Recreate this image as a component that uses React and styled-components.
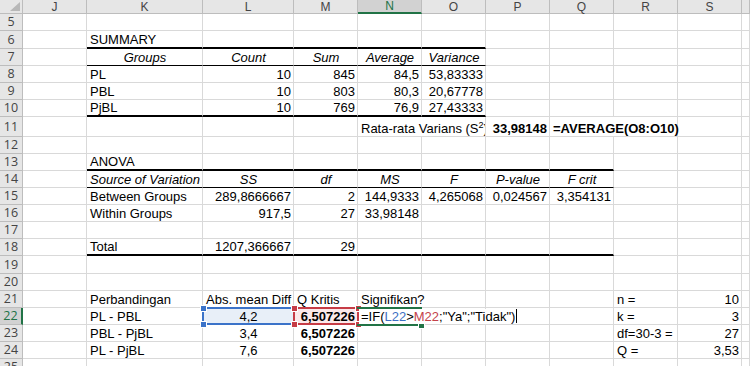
import styled, { createGlobalStyle } from "styled-components";

const GlobalStyle = createGlobalStyle`
  html, body {
    margin: 0;
    padding: 0;
    background: #ffffff;
  }
`;

// column letters after the row header, widths include the 1px grid line
const COLS = ["J", "K", "L", "M", "N", "O", "P", "Q", "R", "S", "T"];
const COL_W = { J: 64, K: 116, L: 91, M: 64, N: 64, O: 64, P: 64, Q: 64, R: 64, S: 64 };
const ROWS = [5, 6, 7, 8, 9, 10, 11, 12, 13, 14, 15, 16, 17, 18, 19, 20, 21, 22, 23, 24, 25];
const ROW_H = { 6: 18, 11: 20, 19: 18 };
const rowH = (r) => ROW_H[r] || 17;

const SUMMARY_COLS = ["K", "L", "M", "N", "O"];
const ANOVA_COLS = ["K", "L", "M", "N", "O", "P", "Q"];

const lineFor = (row, col) => {
  if ((row === 6 || row === 10) && SUMMARY_COLS.includes(col)) return "thick";
  if (row === 7 && SUMMARY_COLS.includes(col)) return "thin";
  if ((row === 13 || row === 18) && ANOVA_COLS.includes(col)) return "thick";
  if (row === 14 && ANOVA_COLS.includes(col)) return "thin";
  return null;
};

const Sup = styled.sup`
  font-size: 9px;
  line-height: 0;
  vertical-align: 5px;
`;

const bold = (t) => ({ t, a: "r", b: true });
const num = (t) => ({ t, a: "r" });
const head = (t, a = "c") => ({ t, a, i: true });

const DATA = {
  6: { K: { t: "SUMMARY" } },
  7: { K: head("Groups"), L: head("Count"), M: head("Sum"), N: head("Average"), O: head("Variance") },
  8: { K: { t: "PL" }, L: num("10"), M: num("845"), N: num("84,5"), O: num("53,83333") },
  9: { K: { t: "PBL" }, L: num("10"), M: num("803"), N: num("80,3"), O: num("20,67778") },
  10: { K: { t: "PjBL" }, L: num("10"), M: num("769"), N: num("76,9"), O: num("27,43333") },
  11: {
    N: {
      t: (
        <span>
          Rata-rata Varians (S<Sup>2</Sup>)
        </span>
      ),
      span: 2,
      clip: true,
    },
    P: bold("33,98148"),
    Q: { t: "=AVERAGE(O8:O10)", b: true, span: 2 },
  },
  13: { K: { t: "ANOVA" } },
  14: {
    K: head("Source of Variation", "l"),
    L: head("SS"),
    M: head("df"),
    N: head("MS"),
    O: head("F"),
    P: head("P-value"),
    Q: head("F crit"),
  },
  15: {
    K: { t: "Between Groups" },
    L: num("289,8666667"),
    M: num("2"),
    N: num("144,9333"),
    O: num("4,265068"),
    P: num("0,024567"),
    Q: num("3,354131"),
  },
  16: { K: { t: "Within Groups" }, L: num("917,5"), M: num("27"), N: num("33,98148") },
  18: { K: { t: "Total" }, L: num("1207,366667"), M: num("29") },
  21: {
    K: { t: "Perbandingan" },
    L: { t: "Abs. mean Diff" },
    M: { t: "Q Kritis" },
    N: { t: "Signifikan?", span: 2 },
    R: { t: "n =" },
    S: num("10"),
  },
  22: {
    K: { t: "PL - PBL" },
    L: { t: "4,2", a: "c", bg: "#e8eff8" },
    M: { ...bold("6,507226"), bg: "#fbe9ea" },
    R: { t: "k =" },
    S: num("3"),
  },
  23: { K: { t: "PBL - PjBL" }, L: { t: "3,4", a: "c" }, M: bold("6,507226"), R: { t: "df=30-3 =" }, S: num("27") },
  24: { K: { t: "PL - PjBL" }, L: { t: "7,6", a: "c" }, M: bold("6,507226"), R: { t: "Q =" }, S: num("3,53") },
};

const ACTIVE_COL = "N";
const ACTIVE_ROW = 22;

const colLeft = (col) => {
  let x = 23;
  for (const c of COLS) {
    if (c === col) return x;
    x += COL_W[c];
  }
  return x;
};
const rowTop = (row) => {
  let y = 14;
  for (const r of ROWS) {
    if (r === row) return y;
    y += rowH(r);
  }
  return y;
};

const Sheet = styled.div`
  position: relative;
  display: grid;
  grid-template-columns: 23px ${COLS.slice(0, -1).map((c) => COL_W[c] + "px").join(" ")} 1fr;
  grid-template-rows: 14px ${ROWS.map((r) => rowH(r) + "px").join(" ")};
  width: 750px;
  height: 366px;
  overflow: hidden;
  background: #ffffff;
  font-family: "Liberation Sans", Arial, sans-serif;
  font-size: 13px;
  color: #000000;
`;

const Corner = styled.div`
  background: #e6e6e6;
  border-right: 1px solid #bdbdbd;
  border-bottom: 1px solid #bdbdbd;
  display: flex;
  align-items: flex-end;
  justify-content: flex-end;
  padding: 0 2px 2px 0;
  box-sizing: border-box;
`;

const ColHead = styled.div`
  background: ${(p) => (p.$active ? "#d2d2d2" : "#e6e6e6")};
  color: ${(p) => (p.$active ? "#217346" : "#444444")};
  border-right: 1px solid #bdbdbd;
  border-bottom: ${(p) => (p.$active ? "2px solid #217346" : "1px solid #bdbdbd")};
  box-sizing: border-box;
  display: flex;
  align-items: center;
  justify-content: center;
  font-family: "Liberation Sans", Arial, sans-serif;
  font-size: 12px;
  line-height: 12px;
`;

const RowHead = styled.div`
  background: ${(p) => (p.$active ? "#d2d2d2" : "#e6e6e6")};
  color: ${(p) => (p.$active ? "#217346" : "#444444")};
  border-right: ${(p) => (p.$active ? "2px solid #217346" : "1px solid #bdbdbd")};
  border-bottom: 1px solid #bdbdbd;
  box-sizing: border-box;
  display: flex;
  align-items: center;
  justify-content: center;
  font-family: "Open Sans", "Noto Sans", sans-serif;
  font-size: 12.5px;
  line-height: 14px;
`;

const justify = { l: "flex-start", c: "center", r: "flex-end" };

const Cell = styled.div`
  grid-column: span ${(p) => p.$span};
  min-width: 0;
  box-sizing: border-box;
  border-right: 1px solid #d9d9d9;
  border-bottom: ${(p) =>
    p.$line === "thick" ? "2px solid #000" : p.$line === "thin" ? "1px solid #000" : "1px solid #d9d9d9"};
  background: ${(p) => p.$bg || "transparent"};
  display: flex;
  align-items: flex-end;
  justify-content: ${(p) => justify[p.$align]};
  padding: 0 2px 0 3px;
  white-space: nowrap;
  overflow: ${(p) => (p.$clip ? "hidden" : "visible")};
  font-weight: ${(p) => (p.$bold ? 700 : 400)};
  font-style: ${(p) => (p.$italic ? "italic" : "normal")};
  line-height: 15px;
`;

const RefBox = styled.div`
  position: absolute;
  box-sizing: border-box;
  border: 2px solid ${(p) => p.$color};
  pointer-events: none;
`;

const Handle = styled.div`
  position: absolute;
  width: 5px;
  height: 5px;
  background: ${(p) => p.$color};
  border: 1px solid #ffffff;
  box-sizing: content-box;
`;

const ActiveEdge = styled.div`
  position: absolute;
  height: 2px;
  background: #217346;
`;

const EditText = styled.div`
  position: absolute;
  display: flex;
  align-items: flex-end;
  background: #ffffff;
  white-space: nowrap;
  line-height: 15px;
  padding-left: 2px;
  span.l {
    color: #3d6fc4;
  }
  span.m {
    color: #c4424a;
  }
`;

const Caret = styled.i`
  display: inline-block;
  width: 1px;
  height: 14px;
  margin-left: 1px;
  margin-bottom: 1px;
  background: #000000;
`;

const SelectAll = () => (
  <svg width="10" height="9" viewBox="0 0 10 9">
    <polygon points="10,0 10,9 0,9" fill="#b8b8b8" />
  </svg>
);

const RefHighlight = ({ col, row, color, handles }) => {
  const x = colLeft(col) - 1;
  const y = rowTop(row) - 1;
  const w = COL_W[col] + 2;
  const h = rowH(row) + 1;
  const spots = {
    tl: [x - 2, y - 2],
    bl: [x - 2, y + h - 4],
    tr: [x + w - 4, y - 2],
    br: [x + w - 4, y + h - 4],
  };
  return (
    <>
      <RefBox $color={color} style={{ left: x, top: y, width: w, height: h }} />
      {handles.map((k) => (
        <Handle key={k} $color={color} style={{ left: spots[k][0], top: spots[k][1] }} />
      ))}
    </>
  );
};

export default function App() {
  const nx = colLeft("N");
  const ny = rowTop(22);
  return (
    <>
      <GlobalStyle />
      <Sheet>
        <Corner>
          <SelectAll />
        </Corner>
        {COLS.map((c) => (
          <ColHead key={c} $active={c === ACTIVE_COL}>
            {c === "T" ? "" : c}
          </ColHead>
        ))}
        {ROWS.map((r) => {
          const row = DATA[r] || {};
          const out = [
            <RowHead key={"h" + r} $active={r === ACTIVE_ROW}>
              {r}
            </RowHead>,
          ];
          let skip = 0;
          COLS.forEach((c) => {
            if (skip > 0) {
              skip--;
              return;
            }
            const d = row[c] || {};
            const span = d.span || 1;
            skip = span - 1;
            out.push(
              <Cell
                key={c + r}
                $span={span}
                $line={lineFor(r, c)}
                $align={d.a || "l"}
                $bold={d.b}
                $italic={d.i}
                $clip={d.clip}
                $bg={d.bg}
              >
                {d.t}
              </Cell>
            );
          });
          return out;
        })}

        <RefHighlight col="L" row={22} color="#3b73c9" handles={["tl", "bl"]} />
        <RefHighlight col="M" row={22} color="#c63c46" handles={["tl", "bl", "tr", "br"]} />

        <ActiveEdge style={{ left: nx - 1, top: ny - 1, width: 65 }} />
        <ActiveEdge style={{ left: nx - 1, top: ny + 16, width: 65 }} />
        <Handle $color="#217346" style={{ left: nx + 60, top: ny + 14 }} />

        <EditText style={{ left: nx + 1, top: ny + 1, height: 15 }}>
          <span>
            =IF(<span className="l">L22</span>&gt;<span className="m">M22</span>;"Ya";"Tidak")
          </span>
          <Caret />
        </EditText>
      </Sheet>
    </>
  );
}
